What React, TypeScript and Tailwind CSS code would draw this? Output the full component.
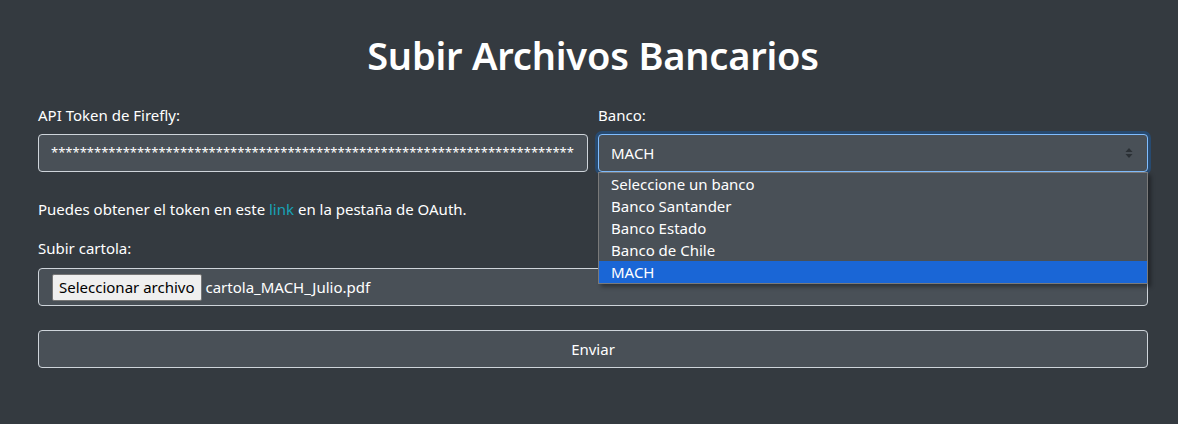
import React from "react";

const font = { fontFamily: '"Noto Sans", "Open Sans", sans-serif' };

function SelectArrows() {
  return (
    <svg width="8" height="12" viewBox="0 0 8 12" className="shrink-0">
      <path d="M4 1 L7.5 5 L0.5 5 Z" fill="#2b3035" />
      <path d="M4 11 L7.5 7 L0.5 7 Z" fill="#2b3035" />
    </svg>
  );
}

export default function App() {
  const stars = "*".repeat(73);
  const options = ["Seleccione un banco", "Banco Santander", "Banco Estado", "Banco de Chile", "MACH"];
  return (
    <div className="w-[1178px] h-[424px] bg-[#343a40] text-white overflow-hidden" style={font}>
      <div className="ml-[38px] w-[1110px] pt-[32px]">
        <h1 className="text-center text-[38px] leading-[46px] font-semibold mb-[25px] tracking-[-0.2px]">
          Subir Archivos Bancarios
        </h1>
        <div className="flex gap-[10px] text-[15px]">
          <div className="w-[550px]">
            <div className="leading-[24px] h-[24px] mb-[7px]">API Token de Firefly:</div>
            <div className="h-[38px] rounded-[4px] border border-[#ced4da] bg-[#495057] pl-[12px] pr-[8px] flex items-center">
              <div className="whitespace-nowrap text-[13px]">{stars}</div>
            </div>
          </div>
          <div className="w-[550px] relative">
            <div className="leading-[24px] h-[24px] mb-[7px]">Banco:</div>
            <div className="h-[38px] rounded-[4px] border border-[#80bdff] bg-[#495057] pl-[12px] pr-[14px] flex items-center justify-between shadow-[0_0_0_3px_rgba(0,123,255,0.25)]">
              <span>MACH</span>
              <SelectArrows />
            </div>
            <div className="absolute left-0 right-0 top-[69px] z-10 bg-[#495057] border border-[#7a7a7a] shadow-[3px_3px_4px_rgba(0,0,0,0.35)]">
              {options.map((o) => (
                <div
                  key={o}
                  className={
                    "h-[22px] leading-[22px] pl-[12px] " + (o === "MACH" ? "bg-[#1a66d6]" : "")
                  }
                >
                  {o}
                </div>
              ))}
            </div>
          </div>
        </div>
        <p className="text-[15px] leading-[24px] mt-[25px]">
          Puedes obtener el token en este <span className="text-[#17a2b8]">link</span> en la pestaña de OAuth.
        </p>
        <div className="text-[15px] leading-[24px] mt-[15px] mb-[8px]">Subir cartola:</div>
        <div className="h-[38px] rounded-[4px] border border-[#ced4da] bg-[#495057] pl-[13px] flex items-center text-[15px]">
          <span className="h-[27px] px-[6px] flex items-center bg-[#efefef] border border-[#767676] text-black rounded-[2px]">
            Seleccionar archivo
          </span>
          <span className="ml-[4px]">cartola_MACH_Julio.pdf</span>
        </div>
        <div className="mt-[24px] h-[38px] rounded-[4px] border border-[#ced4da] bg-[#495057] flex items-center justify-center text-[15px]">
          Enviar
        </div>
      </div>
    </div>
  );
}
